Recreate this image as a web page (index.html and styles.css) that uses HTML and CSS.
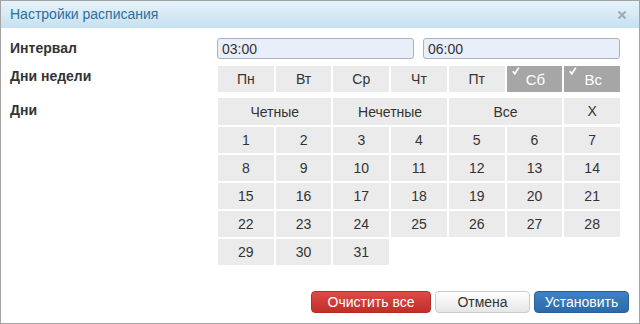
FILE: index.html
```html
<!DOCTYPE html>
<html lang="ru">

<head>
    <meta charset="UTF-8">
    <meta name="viewport" content="width=device-width, initial-scale=1.0">
    <title>Настройки расписания</title>
    <link rel="stylesheet" href="styles.css">
</head>

<body>

<div class="dialog">
    <div class="dialog-title">
        <span>Настройки расписания</span>
        <svg class="close" width="10" height="10" viewBox="0 0 10 10">
            <path d="M1.5 1.5 L8.5 8.5 M8.5 1.5 L1.5 8.5" stroke="#a3abb2" stroke-width="2.2" fill="none"/>
        </svg>
    </div>

    <div class="dialog-body">
        <div class="form-row interval-row">
            <label class="form-label">Интервал</label>
            <div class="interval">
                <input type="text" value="03:00">
                <input type="text" value="06:00">
            </div>
        </div>

        <div class="form-row week-row">
            <label class="form-label">Дни недели</label>
            <div class="cells week" id="week"></div>
        </div>

        <div class="form-row days-row">
            <label class="form-label">Дни</label>
            <div class="cells days" id="days">
                <div class="cell span2">Четные</div>
                <div class="cell span2">Нечетные</div>
                <div class="cell span2">Все</div>
                <div class="cell">X</div>
            </div>
        </div>
    </div>

    <div class="dialog-buttons">
        <button class="btn btn-red">Очистить все</button>
        <button class="btn btn-default">Отмена</button>
        <button class="btn btn-blue">Установить</button>
    </div>
</div>

<script>
    const weekdays = [
        { name: 'Пн', checked: false },
        { name: 'Вт', checked: false },
        { name: 'Ср', checked: false },
        { name: 'Чт', checked: false },
        { name: 'Пт', checked: false },
        { name: 'Сб', checked: true },
        { name: 'Вс', checked: true }
    ];

    const tick = '<svg class="tick" width="8" height="8" viewBox="0 0 8 8">' +
        '<path d="M0.8 4.2 L2.8 6.8 L6.8 0.6" stroke="#fff" stroke-width="1.7" fill="none"/></svg>';

    // Fill the week row
    const week = document.getElementById('week');
    weekdays.forEach(day => {
        const cell = document.createElement('div');
        cell.classList.add('cell');
        if (day.checked) {
            cell.classList.add('checked');
            cell.innerHTML = `${tick}<span>${day.name}</span>`;
        } else {
            cell.textContent = day.name;
        }
        week.appendChild(cell);
    });

    // Fill the days of month
    const days = document.getElementById('days');
    for (let i = 1; i <= 31; i++) {
        const cell = document.createElement('div');
        cell.classList.add('cell');
        cell.textContent = i;
        days.appendChild(cell);
    }
</script>

</body>
</html>
```

FILE: styles.css
```css
body {
    font-family: "Liberation Sans", Arial, sans-serif;
    margin: 0;
    padding: 0;
    background: #fff;
}

.dialog {
    width: 640px;
    height: 324px;
    box-sizing: border-box;
    border: 1px solid #a3a3a3;
    display: flex;
    flex-direction: column;
}

.dialog-title {
    height: 27px;
    background: linear-gradient(to bottom, #e6f2fa, #c6e1f1);
    display: flex;
    align-items: center;
    justify-content: space-between;
    padding: 0 12px 0 9px;
    color: #2f6e9b;
    font-size: 14px;
}

.dialog-title span {
    margin-top: -1px;
}

.dialog-body {
    padding: 10px 0 0 9px;
    flex: 1;
}

.form-row {
    display: grid;
    grid-template-columns: 207px 403px;
}

.form-label {
    font-weight: bold;
    font-size: 14px;
    color: #333;
}

.interval-row .form-label {
    line-height: 21px;
}

.week-row {
    margin-top: 7px;
    margin-bottom: 6px;
}

.week-row .form-label {
    margin-top: 2px;
}

.days-row .form-label {
    margin-top: 4px;
}

.interval {
    display: flex;
    justify-content: space-between;
}

.interval input {
    width: 197px;
    height: 21px;
    box-sizing: border-box;
    border: 1px solid #a9b3c0;
    border-radius: 3px;
    background: #e8effb;
    font-family: inherit;
    font-size: 14px;
    color: #333;
    padding: 0 4px;
}

.cells {
    display: grid;
    grid-template-columns: repeat(7, 1fr);
    gap: 2px;
    width: 402px;
    margin-left: 1px;
}

.cell {
    height: 26px;
    background: #ebebeb;
    color: #333;
    font-size: 14px;
    display: flex;
    align-items: center;
    justify-content: center;
}

.cell.span2 {
    grid-column: span 2;
    height: 27px;
}

.cell.checked {
    position: relative;
    background: #a6a6a6;
    color: #fff;
    font-size: 15px;
}

.cell.checked span {
    margin-left: 2px;
}

.tick {
    position: absolute;
    left: 5px;
    top: 1px;
}

.dialog-buttons {
    display: flex;
    justify-content: flex-end;
    gap: 4px;
    padding: 0 10px 10px 0;
}

.btn {
    height: 22px;
    border-radius: 4px;
    font-family: inherit;
    font-size: 14px;
    padding: 0;
    cursor: pointer;
}

.btn-red {
    width: 120px;
    color: #fff;
    border: 1px solid #b52b27;
    background: linear-gradient(to bottom, #de4a45, #c12e2a);
}

.btn-default {
    width: 95px;
    color: #333;
    border: 1px solid #cccccc;
    background: linear-gradient(to bottom, #ffffff, #e6e6e6);
}

.btn-blue {
    width: 95px;
    color: #fff;
    border: 1px solid #2a5f95;
    background: linear-gradient(to bottom, #3d83c3, #2b6aa8);
}
```
